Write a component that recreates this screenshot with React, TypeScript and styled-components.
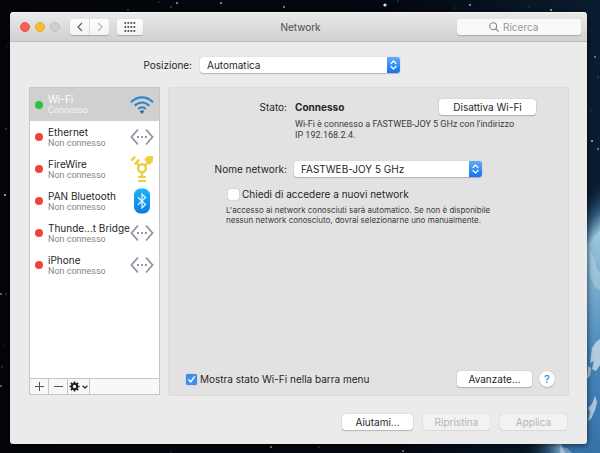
import React, { useState } from "react";
import styled, { createGlobalStyle, css } from "styled-components";

const GlobalStyle = createGlobalStyle`
  *, *::before, *::after { box-sizing: border-box; }
  body { margin: 0; background: #03060b; }
  body, button, input, select {
    font-family: Inter, "Liberation Sans", sans-serif;
    font-size: 10px;
    line-height: 12px;
    color: #262626;
  }
  button, input, select { margin: 0; }
`;

const Desktop = styled.div`
  position: relative;
  display: flex;
  min-height: 100vh;
  padding: 12px 13px 9px 10px;
  overflow: hidden;
`;

const Wallpaper = styled.svg`
  position: absolute;
  inset: 0;
  width: 100%;
  height: 100%;
`;

const Window = styled.main`
  position: relative;
  display: flex;
  flex: 1;
  flex-direction: column;
  min-width: 0;
  border-radius: 4px 4px 3px 3px;
  background: #ebebeb;
  box-shadow: 0 1px 6px rgba(0, 0, 0, 0.7);
  overflow: hidden;
`;

const TitleBar = styled.header`
  display: grid;
  grid-template-columns: 1fr auto 1fr;
  align-items: center;
  height: 30px;
  padding: 0 6px 0 10px;
  border-bottom: 1px solid #b9b9b9;
  background: linear-gradient(#e9e9e9, #d1d1d1);
  box-shadow: inset 0 1px 0 #f5f5f5;
`;

const TitleControls = styled.div`
  display: flex;
  align-items: center;
  gap: 8px;
`;

const Lights = styled.div`
  display: flex;
  gap: 5px;
  margin-right: 2px;
`;

const Light = styled.button<{ $fill: string; $edge: string }>`
  width: 10px;
  height: 10px;
  padding: 0;
  border: 1px solid ${(p) => p.$edge};
  border-radius: 50%;
  background: ${(p) => p.$fill};
`;

const ToolGroup = styled.div`
  display: flex;
  gap: 1px;
  border-radius: 3px;
  background: #d8d8d8;
  box-shadow: 0 1px 1px rgba(0, 0, 0, 0.22);
  overflow: hidden;
`;

const ToolButton = styled.button<{ $wide?: boolean }>`
  display: flex;
  align-items: center;
  justify-content: center;
  width: ${(p) => (p.$wide ? 26 : 19)}px;
  height: 16px;
  padding: 0;
  border: 0;
  background: linear-gradient(#fdfdfd, #f4f4f4);
`;

const Title = styled.h1`
  margin: 0;
  font-size: 10px;
  font-weight: 400;
  color: #4b4b4b;
`;

const SearchField = styled.label`
  display: flex;
  align-items: center;
  justify-self: end;
  gap: 4px;
  width: 124px;
  height: 16px;
  padding-left: 32px;
  border-radius: 3px;
  background: #f9f9f9;
  box-shadow: 0 1px 1px rgba(0, 0, 0, 0.2);
`;

const SearchInput = styled.input`
  flex: 1;
  min-width: 0;
  padding: 0;
  border: 0;
  outline: 0;
  background: transparent;
  &::placeholder { color: #989898; opacity: 1; }
`;

const LocationRow = styled.div`
  display: flex;
  align-items: center;
  gap: 8px;
  padding: 15px 19px 0 0;
`;

const LocationLabel = styled.label`
  width: 182px;
  text-align: right;
`;

const SelectBox = styled.div<{ $width: number }>`
  position: relative;
  width: ${(p) => p.$width}px;
  height: 16px;
  border-radius: 3px;
  background: #fff;
  box-shadow: 0 0 1px rgba(0, 0, 0, 0.3), 0 1px 1px rgba(0, 0, 0, 0.2);
`;

const Select = styled.select`
  width: 100%;
  height: 16px;
  padding: 0 16px 0 7px;
  border: 0;
  border-radius: 3px;
  appearance: none;
  background: transparent;
`;

const SelectCap = styled.span`
  position: absolute;
  top: 0;
  right: 0;
  display: flex;
  align-items: center;
  justify-content: center;
  width: 13px;
  height: 16px;
  border-radius: 0 3px 3px 0;
  background: linear-gradient(#60adf9, #1470f3);
  pointer-events: none;
`;

const Content = styled.div`
  display: flex;
  flex: 1;
  gap: 8px;
  padding: 14px 18px 0 19px;
`;

const Sidebar = styled.aside`
  display: flex;
  flex-direction: column;
  width: 131px;
  margin-bottom: 1px;
  border: 1px solid #c6c6c6;
  background: #fff;
`;

const ServiceList = styled.ul`
  flex: 1;
  margin: 0;
  padding: 0;
  list-style: none;
`;

const Service = styled.button<{ $selected: boolean }>`
  display: grid;
  grid-template-columns: 8px minmax(0, 1fr) 24px;
  align-items: center;
  column-gap: 5px;
  width: 100%;
  height: ${(p) => (p.$selected ? 33 : 32)}px;
  padding: 0 5px;
  border: 0;
  background: ${(p) => (p.$selected ? "#d0d0d0" : "transparent")};
  color: ${(p) => (p.$selected ? "#fff" : "#262626")};
  text-align: left;
`;

const StatusDot = styled.span<{ $on: boolean }>`
  width: 8px;
  height: 8px;
  border-radius: 50%;
  background: ${(p) => (p.$on ? "#29c23f" : "#f0403f")};
`;

const ServiceText = styled.span`
  display: flex;
  flex-direction: column;
  white-space: nowrap;
`;

const ServiceState = styled.span<{ $selected: boolean }>`
  font-family: Roboto, "Liberation Sans", sans-serif;
  font-size: 9px;
  line-height: 11px;
  color: ${(p) => (p.$selected ? "#f4f4f4" : "#858585")};
`;

const ListTools = styled.div`
  display: flex;
  height: 16px;
  border-top: 1px solid #c6c6c6;
  background: #f8f8f8;
`;

const ListTool = styled.button<{ $wide?: boolean }>`
  display: flex;
  align-items: center;
  justify-content: center;
  gap: 2px;
  width: ${(p) => (p.$wide ? 22 : 19)}px;
  padding: 0;
  border: 0;
  border-right: 1px solid #c6c6c6;
  background: transparent;
`;

const Panel = styled.section`
  display: flex;
  flex: 1;
  flex-direction: column;
  justify-content: space-between;
  min-width: 0;
  padding: 11px 13px 8px 0;
  border: 1px solid #dcdcdc;
  border-radius: 2px;
  background: #e2e2e2;
`;

const Form = styled.div`
  display: grid;
  grid-template-columns: 118px 1fr;
  column-gap: 7px;
`;

const FieldLabel = styled.label`
  align-self: center;
  text-align: right;
  white-space: nowrap;
`;

const StatusLine = styled.div`
  display: flex;
  align-items: center;
  justify-content: space-between;
  padding: 0 19px 0 1px;
`;

const Note = styled.p`
  margin: 0;
  font-size: 8px;
  line-height: 10px;
  color: #3a3a3a;
`;

const StatusNote = styled.p`
  grid-column: 2;
  margin: 0;
  padding: 4px 0 20px 1px;
  font-family: Roboto, "Liberation Sans", sans-serif;
  font-size: 9px;
  line-height: 11px;
  color: #3a3a3a;
`;

const JoinOptions = styled.div`
  grid-column: 1 / -1;
  display: flex;
  flex-direction: column;
  gap: 5px;
  padding: 11px 0 0 57px;
`;

const CheckLabel = styled.label<{ $inset?: boolean }>`
  display: flex;
  align-items: center;
  gap: 3px;
  padding-left: ${(p) => (p.$inset ? 2 : 0)}px;
`;

const CheckBox = styled.input`
  width: 11px;
  height: 11px;
  border-radius: 2px;
  appearance: none;
  background: #fff;
  box-shadow: 0 0 1px rgba(0, 0, 0, 0.5);
  &:checked {
    background: #3b8ff0 url("data:image/svg+xml,%3Csvg xmlns='http://www.w3.org/2000/svg' viewBox='0 0 11 11'%3E%3Cpath d='M2.7 5.8 4.7 8 8.4 2.8' fill='none' stroke='white' stroke-width='1.4' stroke-linecap='round' stroke-linejoin='round'/%3E%3C/svg%3E");
  }
`;

const PanelFooter = styled.div`
  display: flex;
  align-items: center;
  gap: 7px;
  padding-left: 17px;
  & > :first-child { flex: 1; }
`;

const PushButton = styled.button<{ $width: number }>`
  width: ${(p) => p.$width}px;
  height: 16px;
  padding: 0;
  border: 0;
  border-radius: 3px;
  background: #fff;
  box-shadow: 0 0 1px rgba(0, 0, 0, 0.35), 0 1px 1px rgba(0, 0, 0, 0.2);
  ${(p) =>
    p.disabled &&
    css`
      background: #f2f2f2;
      color: #b4b4b4;
      box-shadow: 0 0 1px rgba(0, 0, 0, 0.25), 0 1px 1px rgba(0, 0, 0, 0.06);
    `}
`;

const HelpButton = styled.button`
  width: 16px;
  height: 16px;
  padding: 0;
  border: 0;
  border-radius: 50%;
  background: #fff;
  box-shadow: 0 0 1px rgba(0, 0, 0, 0.35), 0 1px 1px rgba(0, 0, 0, 0.15);
  font-size: 11px;
  font-weight: 500;
  color: #2f8fe0;
`;

const Actions = styled.footer`
  display: flex;
  justify-content: flex-end;
  gap: 10px;
  padding: 18px 20px 14px;
`;

const stars: [number, number, number, number][] = [
  [385, 5, 1.6, 1], [221, 3, 1, 0.7], [177, 3, 1, 0.7], [171, 7, 0.7, 0.6],
  [284, 7, 0.9, 0.8], [128, 10, 0.8, 0.5], [159, 2, 0.6, 0.5], [470, 5, 0.9, 0.8],
  [551, 10, 1, 0.9], [455, 8, 0.6, 0.4], [529, 7, 0.6, 0.4], [398, 1, 0.7, 0.4],
  [592, 141, 1.1, 0.8], [598, 149, 0.9, 0.6], [595, 57, 0.9, 0.6], [598, 77, 0.7, 0.4],
  [591, 110, 0.6, 0.4], [590, 28, 0.6, 0.3], [5, 195, 1, 0.9], [1, 294, 0.9, 0.6],
  [6, 294, 0.7, 0.5], [6, 129, 0.8, 0.5], [7, 46, 0.6, 0.4], [1, 386, 0.9, 0.6],
  [2, 367, 0.7, 0.4], [4, 346, 0.5, 0.4], [271, 447, 1, 0.7], [403, 451, 1, 0.6],
  [319, 447, 0.7, 0.5], [171, 452, 0.6, 0.4], [80, 9, 0.6, 0.3],
];

const Space = () => (
  <Wallpaper viewBox="0 0 600 453" preserveAspectRatio="xMaxYMax slice" aria-hidden="true">
    <defs>
      <linearGradient id="sky" x1="0" x2="1" y1="0" y2="0">
        <stop offset="0" stopColor="#030509" />
        <stop offset="0.65" stopColor="#040810" />
        <stop offset="1" stopColor="#0a1d30" />
      </linearGradient>
      <radialGradient id="glow" cx="760" cy="370" r="250" gradientUnits="userSpaceOnUse">
        <stop offset="0.84" stopColor="#a5d0e4" />
        <stop offset="0.9" stopColor="#3f7096" stopOpacity="0.8" />
        <stop offset="1" stopColor="#0a1d30" stopOpacity="0" />
      </radialGradient>
      <linearGradient id="earth" x1="0" x2="0" y1="200" y2="453" gradientUnits="userSpaceOnUse">
        <stop offset="0" stopColor="#b4d8e7" />
        <stop offset="0.35" stopColor="#75abce" />
        <stop offset="0.65" stopColor="#4584bb" />
        <stop offset="1" stopColor="#3672a8" />
      </linearGradient>
    </defs>
    <rect width="600" height="453" fill="url(#sky)" />
    {stars.map(([x, y, r, o]) => (
      <circle key={`${x}-${y}`} cx={x} cy={y} r={r} fill="#d5e5ee" opacity={o} />
    ))}
    <circle cx="760" cy="370" r="250" fill="url(#glow)" />
    <circle cx="760" cy="370" r="212" fill="url(#earth)" />
    <g fill="#dce8ee" opacity="0.7">
      <path d="M592 348l4-6 4-3v26l-4 6-4-2 2-8-4 2z" />
      <path d="M588 366l3 2-1 8-3 3z" />
      <path d="M595 396l2 6-2 8-4 9-3 2 2-9-2-4 4-4z" />
      <path d="M590 250l4 8 3 12 3 2v18l-5-3-5-10z" opacity="0.45" />
      <path d="M560 447l7 1 5 5h-12z" opacity="0.5" />
    </g>
  </Wallpaper>
);

const UpDown = () => (
  <SelectCap>
    <svg width="7" height="10" viewBox="0 0 7 10" fill="none" stroke="#fff" strokeWidth="1.2" strokeLinecap="round" strokeLinejoin="round">
      <path d="M1 3.5 3.5 1 6 3.5M1 6.5 3.5 9 6 6.5" />
    </svg>
  </SelectCap>
);

const WifiIcon = () => (
  <svg width="24" height="20" viewBox="0 0 24 20" fill="none" stroke="#3288c9" strokeWidth="2.2">
    <path d="M1 7.3C7.2 .7 16.8 .7 23 7.3M4.7 10.7c4.2-4.3 10.4-4.3 14.6 0M8.2 14c2.2-2.2 5.4-2.2 7.6 0" />
    <path d="M9.7 16.2c1.4-1.2 3.2-1.2 4.6 0L12 19z" fill="#246fae" stroke="none" />
  </svg>
);

const LinkIcon = () => (
  <svg width="24" height="18" viewBox="0 0 24 18" fill="none" stroke="#9297a3" strokeWidth="1.9">
    <path d="M8 1.5 1.5 9 8 16.5M16 1.5 22.5 9 16 16.5" />
    <path d="M7 9h2M11 9h2M15 9h2" />
  </svg>
);

const FireWireIcon = () => (
  <svg width="24" height="28" viewBox="0 0 24 28" fill="none" stroke="#eccd3e" strokeWidth="2.4">
    <circle cx="12" cy="13.3" r="3.9" />
    <path d="m9.2 10.6-2.6-2.7M14.8 10.6l3.2-3.4M12 17.4v4" />
    <path d="m1.2 5.6 4-4M4.6 9.2l4.6-4.6M8.2 22h7.6M8.2 26h7.6" strokeWidth="2.2" />
    <path d="m14.2 4.6 3.3-3.3 5.7-.4-.5 5.8-3.2 3.2z" fill="#eccd3e" stroke="none" />
  </svg>
);

const BluetoothIcon = () => (
  <svg width="24" height="26" viewBox="0 0 24 26" fill="none">
    <defs>
      <linearGradient id="bt" x1="0" x2="0" y1="0" y2="1">
        <stop stopColor="#1cb5f8" />
        <stop offset="1" stopColor="#087be5" />
      </linearGradient>
    </defs>
    <rect x="4" y="0.5" width="16" height="25" rx="6.5" fill="url(#bt)" />
    <path d="m8 9.2 7.6 7.3L12 20V6l3.6 3.5L8 16.8" stroke="#d9f1ff" strokeWidth="1.3" />
  </svg>
);

const GearIcon = () => (
  <svg width="11" height="11" viewBox="0 0 11 11" fill="none" stroke="#222">
    <circle cx="5.5" cy="5.5" r="2.7" strokeWidth="2" />
    <path
      strokeWidth="1.7"
      d="M5.5 .4v2M5.5 8.6v2M.4 5.5h2M8.6 5.5h2M1.9 1.9l1.4 1.4M7.7 7.7l1.4 1.4M1.9 9.1l1.4-1.4M7.7 3.3l1.4-1.4"
    />
  </svg>
);

const services = [
  { name: "Wi-Fi", state: "Connesso", on: true, icon: <WifiIcon /> },
  { name: "Ethernet", state: "Non connesso", on: false, icon: <LinkIcon /> },
  { name: "FireWire", state: "Non connesso", on: false, icon: <FireWireIcon /> },
  { name: "PAN Bluetooth", state: "Non connesso", on: false, icon: <BluetoothIcon /> },
  { name: "Thunde...t Bridge", state: "Non connesso", on: false, icon: <LinkIcon /> },
  { name: "iPhone", state: "Non connesso", on: false, icon: <LinkIcon /> },
];

export default function App() {
  const [selected, setSelected] = useState("Wi-Fi");

  return (
    <>
      <GlobalStyle />
      <Desktop>
        <Space />
        <Window>
          <TitleBar>
            <TitleControls>
              <Lights>
                <Light aria-label="Chiudi" $fill="#f95f57" $edge="#e6534c" />
                <Light aria-label="Riduci" $fill="#fbbd2e" $edge="#e5a92c" />
                <Light aria-label="Ingrandisci" $fill="#cfcfcf" $edge="#bfbfbf" />
              </Lights>
              <ToolGroup>
                <ToolButton aria-label="Indietro">
                  <svg width="6" height="10" viewBox="0 0 6 10" fill="none" stroke="#696969" strokeWidth="1.4">
                    <path d="M5 1 1 5l4 4" />
                  </svg>
                </ToolButton>
                <ToolButton aria-label="Avanti">
                  <svg width="6" height="10" viewBox="0 0 6 10" fill="none" stroke="#bcbcbc" strokeWidth="1.3">
                    <path d="m1 1 4 4-4 4" />
                  </svg>
                </ToolButton>
              </ToolGroup>
              <ToolGroup>
                <ToolButton $wide aria-label="Mostra tutte">
                  <svg width="12" height="10" viewBox="0 0 12 10" fill="#555">
                    {[0, 3, 6, 9].map((x) =>
                      [0, 4, 8].map((y) => <rect key={`${x}-${y}`} x={x + 0.5} y={y} width="1.7" height="1.9" />)
                    )}
                  </svg>
                </ToolButton>
              </ToolGroup>
            </TitleControls>
            <Title>Network</Title>
            <SearchField>
              <svg width="10" height="10" viewBox="0 0 10 10" fill="none" stroke="#858585" strokeWidth="1.1">
                <circle cx="4.2" cy="4.2" r="3.4" />
                <path d="m6.7 6.7 2.8 2.8" />
              </svg>
              <SearchInput type="search" placeholder="Ricerca" aria-label="Ricerca" />
            </SearchField>
          </TitleBar>

          <LocationRow>
            <LocationLabel htmlFor="location">Posizione:</LocationLabel>
            <SelectBox $width={200}>
              <Select id="location">
                <option>Automatica</option>
              </Select>
              <UpDown />
            </SelectBox>
          </LocationRow>

          <Content>
            <Sidebar>
              <ServiceList>
                {services.map((s) => (
                  <li key={s.name}>
                    <Service $selected={s.name === selected} onClick={() => setSelected(s.name)}>
                      <StatusDot $on={s.on} />
                      <ServiceText>
                        {s.name}
                        <ServiceState $selected={s.name === selected}>{s.state}</ServiceState>
                      </ServiceText>
                      {s.icon}
                    </Service>
                  </li>
                ))}
              </ServiceList>
              <ListTools>
                <ListTool aria-label="Aggiungi">
                  <svg width="9" height="9" viewBox="0 0 9 9" stroke="#555">
                    <path d="M4.5 0v9M0 4.5h9" />
                  </svg>
                </ListTool>
                <ListTool aria-label="Rimuovi">
                  <svg width="9" height="9" viewBox="0 0 9 9" stroke="#555">
                    <path d="M0 4.5h9" />
                  </svg>
                </ListTool>
                <ListTool $wide aria-label="Azioni">
                  <GearIcon />
                  <svg width="6" height="4" viewBox="0 0 6 4" fill="none" stroke="#333" strokeWidth="1.3">
                    <path d="M.6.7 3 3 5.4.7" />
                  </svg>
                </ListTool>
              </ListTools>
            </Sidebar>

            <Panel>
              <Form>
                <FieldLabel as="span">Stato:</FieldLabel>
                <StatusLine>
                  <strong>Connesso</strong>
                  <PushButton $width={97}>Disattiva Wi-Fi</PushButton>
                </StatusLine>
                <StatusNote>
                  Wi-Fi è connesso a FASTWEB-JOY 5 GHz con l'indirizzo
                  <br />
                  IP 192.168.2.4.
                </StatusNote>
                <FieldLabel htmlFor="network">Nome network:</FieldLabel>
                <SelectBox $width={188}>
                  <Select id="network">
                    <option>FASTWEB-JOY 5 GHz</option>
                  </Select>
                  <UpDown />
                </SelectBox>
                <JoinOptions>
                  <CheckLabel $inset>
                    <CheckBox type="checkbox" />
                    Chiedi di accedere a nuovi network
                  </CheckLabel>
                  <Note>
                    L'accesso ai network conosciuti sarà automatico. Se non è disponibile
                    <br />
                    nessun network conosciuto, dovrai selezionarne uno manualmente.
                  </Note>
                </JoinOptions>
              </Form>
              <PanelFooter>
                <CheckLabel>
                  <CheckBox type="checkbox" defaultChecked />
                  Mostra stato Wi-Fi nella barra menu
                </CheckLabel>
                <PushButton $width={75}>Avanzate...</PushButton>
                <HelpButton aria-label="Aiuto">?</HelpButton>
              </PanelFooter>
            </Panel>
          </Content>

          <Actions>
            <PushButton $width={71}>Aiutami...</PushButton>
            <PushButton $width={67} disabled>Ripristina</PushButton>
            <PushButton $width={67} disabled>Applica</PushButton>
          </Actions>
        </Window>
      </Desktop>
    </>
  );
}
